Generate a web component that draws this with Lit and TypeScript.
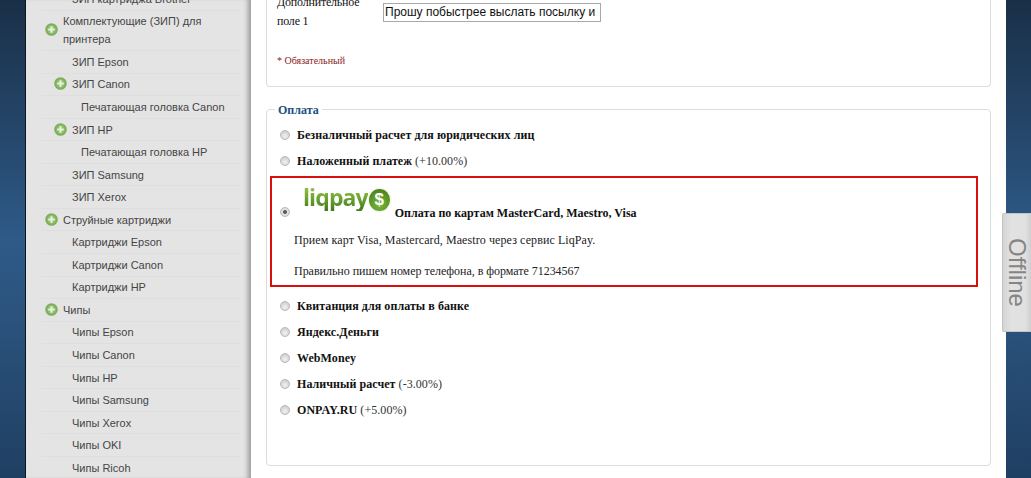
import { LitElement, html, css } from "lit";
import { customElement } from "lit/decorators.js";

type Row = { t: string; lvl: number; plus?: boolean };
const rows: Row[] = [
  { t: "ЗИП картриджа Brother", lvl: 1 },
  { t: "Комплектующие (ЗИП) для принтера", lvl: 0, plus: true },
  { t: "ЗИП Epson", lvl: 1 },
  { t: "ЗИП Canon", lvl: 1, plus: true },
  { t: "Печатающая головка Canon", lvl: 2 },
  { t: "ЗИП HP", lvl: 1, plus: true },
  { t: "Печатающая головка HP", lvl: 2 },
  { t: "ЗИП Samsung", lvl: 1 },
  { t: "ЗИП Xerox", lvl: 1 },
  { t: "Струйные картриджи", lvl: 0, plus: true },
  { t: "Картриджи Epson", lvl: 1 },
  { t: "Картриджи Canon", lvl: 1 },
  { t: "Картриджи HP", lvl: 1 },
  { t: "Чипы", lvl: 0, plus: true },
  { t: "Чипы Epson", lvl: 1 },
  { t: "Чипы Canon", lvl: 1 },
  { t: "Чипы HP", lvl: 1 },
  { t: "Чипы Samsung", lvl: 1 },
  { t: "Чипы Xerox", lvl: 1 },
  { t: "Чипы OKI", lvl: 1 },
  { t: "Чипы Ricoh", lvl: 1 },
];

const payA = [
  { b: "Безналичный расчет для юридических лиц", x: "" },
  { b: "Наложенный платеж", x: " (+10.00%)" },
];
const payB = [
  { b: "Квитанция для оплаты в банке", x: "" },
  { b: "Яндекс.Деньги", x: "" },
  { b: "WebMoney", x: "" },
  { b: "Наличный расчет", x: " (-3.00%)" },
  { b: "ONPAY.RU", x: " (+5.00%)" },
];

@customElement("app-root")
export class AppRoot extends LitElement {
  static styles = css`
    :host {
      display: block;
      width: 1031px;
      height: 478px;
      overflow: hidden;
      position: relative;
      background: linear-gradient(180deg, #1a2f47 0%, #2e5a88 50%, #2c5580 62%, #1f3f62 100%);
      font-family: "Liberation Serif", serif;
    }
    .page { display: flex; height: 478px; }
    .side {
      margin-left: 25px;
      width: 226px;
      height: 478px;
      flex: none;
      background: #e4e4e4;
      border-left: 1px solid #0c1620;
      box-sizing: border-box;
      overflow: hidden;
      box-shadow: inset -6px 0 5px -3px rgba(0, 0, 0, 0.32);
    }
    .list { margin: -12px 0 0 0; padding: 0 0 0 15px; width: 199px; }
    .row {
      position: relative;
      font: 11px/18px "Liberation Sans", sans-serif;
      color: #444;
      padding: 1.8px 0 1.75px;
      border-bottom: 1px solid #dedede;
      box-sizing: border-box;
    }
    .lvl0 { padding-left: 22px; }
    .lvl1 { padding-left: 31px; }
    .lvl2 { padding-left: 40px; }
    .plus {
      position: absolute;
      top: 50%;
      margin-top: -7px;
      width: 13px;
      height: 13px;
    }
    .lvl0 .plus { left: 4px; }
    .lvl1 .plus { left: 13px; }
    .main {
      width: 755px;
      flex: none;
      height: 478px;
      background: #fff;
      box-sizing: border-box;
      padding-left: 15px;
      overflow: hidden;
    }
    .box {
      width: 725px;
      box-sizing: border-box;
      border: 1px solid #dcdcdc;
      border-radius: 4px;
      background: #fff;
    }
    .top {
      height: 101px;
      margin-top: -14px;
      padding: 6px 10px 0;
      border-top: none;
      font-size: 12px;
      color: #111;
    }
    .field { display: flex; align-items: flex-start; }
    .lbl { width: 106px; flex: none; line-height: 19px; padding-top: 1px; letter-spacing: -0.2px; }
    .input {
      margin-top: 11px;
      width: 218px;
      height: 19px;
      box-sizing: border-box;
      border: 1px solid #a9a9a9;
      font: 12px/17px "Liberation Sans", sans-serif;
      padding-left: 1px;
      color: #111;
      white-space: nowrap;
      overflow: hidden;
    }
    .req { margin-top: 24px; font-size: 10px; line-height: 12px; color: #8a1c24; }
    .pay {
      margin-top: 22px;
      height: 357px;
      position: relative;
      padding: 12px 3px 0;
    }
    .legend {
      position: absolute;
      left: 8px;
      top: -7px;
      padding: 0 3px;
      background: #fff;
      font-size: 12px;
      line-height: 14px;
      font-weight: bold;
      color: #20507f;
    }
    .opt { height: 26px; display: flex; align-items: center; font-size: 12px; color: #333; padding-left: 10px; white-space: pre; letter-spacing: 0.05px; }
    .opt b { color: #111; }
    .radio {
      flex: none;
      width: 10px;
      height: 10px;
      border-radius: 50%;
      margin-right: 7px;
      box-sizing: border-box;
      border: 1px solid #b8b8b8;
      background: radial-gradient(circle at 50% 65%, #f2f2f2 0%, #d6d6d6 60%, #c4c4c4 100%);
    }
    .radio.on {
      background: radial-gradient(circle, #555 0%, #666 28%, #e4e4e4 42%, #d0d0d0 100%);
    }
    .hl {
      border: 2px solid #d90f0f;
      height: 111px;
      box-sizing: border-box;
      width: 708px;
      margin: 2px 0 6px;
      padding: 0 0 0 8px;
    }
    .hlhead { display: flex; align-items: flex-end; height: 40px; font-size: 12px; color: #111; }
    .hlhead .radio { margin: 0; position: relative; top: -1px; }
    .logo {
      display: flex;
      align-items: center;
      margin: 0 5px 0 13px;
      height: 30px;
      position: relative;
      top: -6px;
    }
    .lq {
      font: 700 23px/28px "Open Sans", "Liberation Sans", sans-serif;
      letter-spacing: -0.9px;
      background: linear-gradient(180deg, #a6cb4e 0%, #6ba330 55%, #3f7a1a 100%);
      -webkit-background-clip: text;
      background-clip: text;
      color: transparent;
    }
    .coin {
      width: 21px;
      height: 22px;
      margin-left: 1px;
      margin-top: 5px;
      border-radius: 50%;
      background: radial-gradient(circle at 50% 70%, #7cb83a 0%, #4f8a1e 70%, #3e7416 100%);
      box-shadow: 0 0 2px #b8cf9c;
      color: #fff;
      font: bold 17px/22px "Liberation Sans", sans-serif;
      text-align: center;
    }
    .hlhead .title { font-weight: bold; position: relative; top: 3px; }
    .hltext { margin-top: 15px; padding-left: 14px; font-size: 12px; line-height: 14px; color: #222; }
    .hltext p { margin: 0; }
    .hltext .l1 { letter-spacing: 0.09px; }
    .hltext .l2 { margin-top: 17px; letter-spacing: -0.03px; }
    .tab {
      position: absolute;
      left: 1002px;
      top: 213px;
      width: 29px;
      height: 119px;
      box-sizing: border-box;
      background: linear-gradient(90deg, #d4d4d4 0%, #e2e2e2 30%, #e0e0e0 80%, #cfcfcf 100%);
      border: 1px solid #c4c4c4;
      border-right: none;
      border-radius: 2px 0 0 2px;
      display: flex;
      align-items: center;
      justify-content: center;
      writing-mode: vertical-rl;
      font: 24px/27px "Liberation Sans", sans-serif;
      color: #858585;
    }
  `;

  private plus() {
    return html`<svg class="plus" viewBox="0 0 13 13">
      <circle cx="6.5" cy="6.5" r="6.3" fill="#7fae5f" />
      <circle cx="6.5" cy="6.5" r="4.4" fill="#8cc06c" />
      <path d="M6.5 3.2v6.6M3.2 6.5h6.6" stroke="#e6f1dc" stroke-width="2.2" />
    </svg>`;
  }

  private opt(o: { b: string; x: string }) {
    return html`<div class="opt"><span class="radio"></span><b>${o.b}</b>${o.x}</div>`;
  }

  render() {
    return html`
      <div class="page">
        <nav class="side">
          <div class="list">
            ${rows.map(
              (r) => html`<div class="row lvl${r.lvl}">${r.plus ? this.plus() : ""}${r.t}</div>`
            )}
          </div>
        </nav>
        <main class="main">
          <section class="box top">
            <div class="field">
              <div class="lbl">Дополнительное поле 1</div>
              <div class="input">Прошу побыстрее выслать посылку и</div>
            </div>
            <div class="req">* Обязательный</div>
          </section>
          <section class="box pay">
            <div class="legend">Оплата</div>
            ${payA.map((o) => this.opt(o))}
            <div class="hl">
              <div class="hlhead">
                <span class="radio on"></span>
                <span class="logo"><span class="lq">liqpay</span><span class="coin">$</span></span>
                <span class="title">Оплата по картам MasterCard, Maestro, Visa</span>
              </div>
              <div class="hltext">
                <p class="l1">Прием карт Visa, Mastercard, Maestro через сервис LiqPay.</p>
                <p class="l2">Правильно пишем номер телефона, в формате 71234567</p>
              </div>
            </div>
            ${payB.map((o) => this.opt(o))}
          </section>
        </main>
      </div>
      <div class="tab">Offline</div>
    `;
  }
}
